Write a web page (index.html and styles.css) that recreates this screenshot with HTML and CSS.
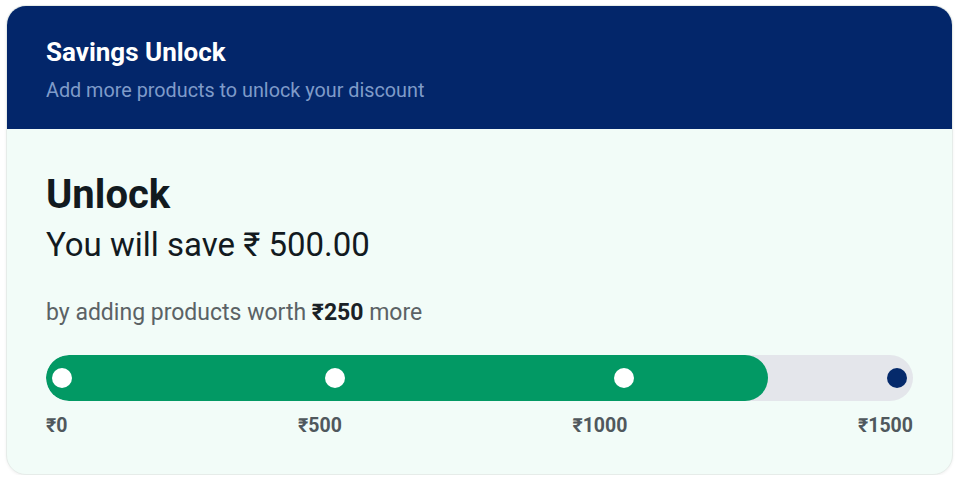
FILE: index.html
```html
<!DOCTYPE html>
<html>
<head>
  <meta charset="utf-8">
  <title>Savings Unlock</title>
  <link rel="stylesheet" href="styles.css">
</head>
<body>
  <div class="card">
    <div class="card-head">
      <h2 class="head-title">Savings Unlock</h2>
      <p class="head-sub">Add more products to unlock your discount</p>
    </div>

    <div class="card-body">
      <h1 class="unlock-title">Unlock</h1>
      <p class="save-line">You will save ₹ 500.00</p>
      <p class="hint">by adding products worth <strong>₹250</strong> more</p>

      <div class="progress">
        <div class="progress-fill" style="width: 83.33%"></div>
        <span class="dot dot-start"></span>
        <span class="dot dot-done" style="left: 33.33%"></span>
        <span class="dot dot-done" style="left: 66.67%"></span>
        <span class="dot dot-end"></span>
      </div>

      <div class="progress-labels">
        <span>₹0</span>
        <span>₹500</span>
        <span>₹1000</span>
        <span>₹1500</span>
      </div>
    </div>
  </div>
</body>
</html>
```

FILE: styles.css
```css
body {
  margin: 0;
  padding: 5px 6px 0 6px;
  background: #ffffff;
  font-family: Roboto, "Noto Sans", "DejaVu Sans", sans-serif;
}

.card {
  border-radius: 20px;
  overflow: hidden;
  background: #f2fcf8;
  border: 1px solid #e6ece9;
  box-shadow: 0 1px 3px rgba(0, 0, 0, 0.06);
}

/* header strip */
.card-head {
  box-sizing: border-box;
  height: 123px;
  background: #03266a;
  padding: 30px 39px 0 39px;
}

.head-title {
  margin: 0;
  font-size: 26px;
  font-weight: 700;
  line-height: 32px;
  color: #ffffff;
}

.head-sub {
  margin: 10px 0 0 0;
  font-size: 19.8px;
  line-height: 26px;
  color: #7f9bc9;
}

/* body */
.card-body {
  box-sizing: border-box;
  height: 345px;
  padding: 42px 39px 0 39px;
}

.unlock-title {
  margin: 0;
  font-size: 40px;
  font-weight: 700;
  line-height: 48px;
  color: #121a1f;
}

.save-line {
  margin: 6px 0 0 0;
  font-size: 33px;
  line-height: 40px;
  color: #121a1f;
}

.hint {
  margin: 33px 0 0 0;
  font-size: 23px;
  line-height: 30px;
  color: #5b6265;
}

.hint strong {
  color: #1a2126;
  font-weight: 700;
}

.progress {
  position: relative;
  margin-top: 27px;
  height: 46px;
  border-radius: 23px;
  background: #e4e6eb;
  overflow: hidden;
}

.progress-fill {
  height: 100%;
  border-radius: 23px;
  background: #029964;
}

.dot {
  position: absolute;
  top: 13px;
  width: 20px;
  height: 20px;
  border-radius: 50%;
  background: #ffffff;
  transform: translateX(-50%);
}

.dot-start {
  left: 6px;
  transform: none;
}

.dot-end {
  right: 6px;
  transform: none;
  background: #052a6b;
}

.progress-labels {
  display: flex;
  justify-content: space-between;
  margin-top: 13px;
  font-size: 19.5px;
  font-weight: 700;
  line-height: 24px;
  color: #50585d;
}
```
